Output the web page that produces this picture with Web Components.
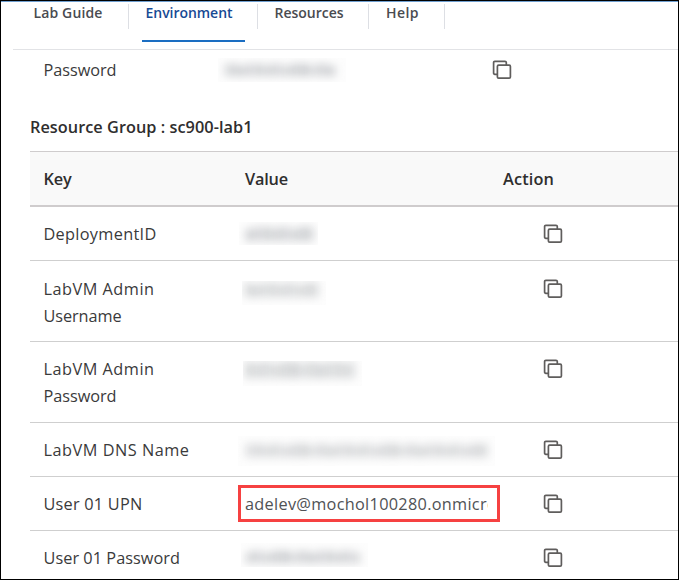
<!DOCTYPE html>
<html lang="en"><head><meta charset="utf-8"><title>Environment</title>
<style>
html,body{margin:0;height:100%;overflow:hidden;background:#fff}
body{font-family:"Open Sans","Noto Sans",sans-serif;color:#323130}
</style></head><body>
<lab-window></lab-window>
<script>
const define=(name,cls)=>customElements.define(name,cls);
class Base extends HTMLElement{
  connectedCallback(){
    if(this.shadowRoot)return;
    this.attachShadow({mode:'open'}).innerHTML=this.render();
    this.ready&&this.ready();
  }
  val(n,d=''){return this.getAttribute(n)??d}
}
/* Text whose tracking is adjusted to a target line width. */
define('fit-text',class extends Base{
  render(){return `<style>:host{display:block;white-space:nowrap;width:max-content}span{display:inline-block}</style><span><slot></slot></span>`}
  ready(){
    const s=this.shadowRoot.querySelector('span'),n=this.textContent.length;
    s.style.letterSpacing=((+this.val('w')-s.getBoundingClientRect().width)/n)+'px';
  }
});
define('copy-icon',class extends Base{
  render(){return `<style>:host{display:block;width:20px;height:20px}svg{display:block}</style>
  <svg width="20" height="20" viewBox="0.2 0.5 20 20" fill="none" stroke="#5f5d5c" stroke-width="1.7"><path d="M5.6 14.8H3.1Q1.8 14.8 1.8 13.5V3.1Q1.8 1.8 3.1 1.8H13.2Q14.5 1.8 14.5 3.1V5.7"/><rect x="5.6" y="5.7" width="13" height="13" rx="1.2"/></svg>`}
});
define('masked-value',class extends Base{
  render(){
    const w=+this.val('w'),h=+this.val('h'),l=+this.val('l',8),r=+this.val('r',8),t=+this.val('t',6),b=+this.val('b',6);
    let bars='',x=l,i=+this.val('seed',1);
    while(x<w-r){const bw=Math.min(4+(i*7)%6,w-r-x),tall=(i*5)%3;
      bars+=`<rect x="${x}" y="${t+(tall?0:2)}" width="${bw}" height="${h-t-b-(tall?0:2)}" opacity="${.78+(i%4)*.07}"/>`;x+=bw+1;i++}
    return `<style>:host{display:block;overflow:hidden;width:${w}px;height:${h}px;background:#fdfdfd}svg{display:block;filter:blur(4.5px)}</style><svg width="${w}" height="${h}" fill="${this.val('ink','#c9cbce')}">${bars}</svg>`}
});
define('nav-tab',class extends Base{
  render(){return `<style>
  :host{display:block;box-sizing:border-box;width:${this.val('width')}px;height:39px;padding-left:${this.val('pad')}px;position:relative;font-size:14px;font-weight:600;line-height:20px;color:#494b50}
  :host([active]){color:#174a94}
  .sep{position:absolute;right:0;top:1px;width:1px;height:25px;background:#dddfe4}
  .line{position:absolute;left:13px;bottom:0;width:103px;height:2px;background:#1b6ec2}
  </style><slot></slot><i class="sep"></i>${this.hasAttribute('active')?'<i class="line"></i>':''}`}
});
define('tab-bar',class extends Base{
  render(){return `<style>:host{display:flex;box-sizing:border-box;height:47px;margin-left:12px;border-bottom:1px solid #e2e3e6}</style><slot></slot>`}
});
define('data-row',class extends Base{
  render(){return `<style>
  :host{display:grid;grid-template-columns:201px 258px 1fr;box-sizing:border-box;height:${this.val('height')}px;border-bottom:1px solid #cfcfcf;font-size:16.3px;line-height:26.5px;color:#3a3a3b}
  .k{padding:${this.val('kt',14)}px 0 0 13.5px}.v{padding:${this.val('vt',13)}px 0 0 ${this.val('vx',14)}px}.a{padding:${this.val('at',17)}px 0 0 54px}
  :host([head]){background:#f9f9f9;border-top:1px solid #cfcccd;border-bottom:2px solid #cfcccd;font-weight:600;color:#2f2e2e}
  :host([head]) .a{padding-left:14px}
  :host([last]){border:0}
  </style><div class="k"><slot name="key"></slot></div><div class="v"><slot name="value"></slot></div><div class="a"><slot name="action"><copy-icon></copy-icon></slot></div>`}
});
define('red-frame',class extends Base{
  render(){return `<style>:host{display:flex;box-sizing:border-box;width:262px;height:37px;border:3px solid #f64141;padding:3px 9px 0 4px;position:relative;z-index:1;color:#505255}div{overflow:hidden;width:243px}</style><div><slot></slot></div>`}
});
define('lab-window',class extends Base{
  render(){return `<style>
  :host{display:block;box-sizing:border-box;width:679px;height:580px;border:1px solid #000;overflow:hidden;background:#fff}
  .top{border-top:1px solid #6f9fd0;padding-top:1px}
  .pw{display:grid;grid-template-columns:217px 274px 1fr;height:63px;box-sizing:border-box;font-size:16.3px;line-height:26px;color:#3a3a3b;padding-top:7px}
  .pw>:first-child{margin-left:42.5px}
  .pw copy-icon{margin-top:3px}
  .pw masked-value{margin-top:1px}
  h2{margin:0;padding:1px 0 0 29px;height:38px;box-sizing:border-box;font-size:16.3px;line-height:26px;font-weight:600;color:#2f2e2e}
  .table{margin-left:29px}
  </style>
  <div class="top"><tab-bar>
   <nav-tab width="116" pad="20.5"><fit-text w="69">Lab Guide</fit-text></nav-tab>
   <nav-tab active width="129" pad="16.5"><fit-text w="87">Environment</fit-text></nav-tab>
   <nav-tab width="111" pad="16.5"><fit-text w="69">Resources</fit-text></nav-tab>
   <nav-tab width="76" pad="17"><fit-text w="33">Help</fit-text></nav-tab>
  </tab-bar></div>
  <div class="pw"><fit-text w="73">Password</fit-text><masked-value w="128" h="24" l="7" r="10"></masked-value><copy-icon></copy-icon></div>
  <h2><fit-text w="222.5">Resource Group : sc900-lab1</fit-text></h2>
  <div class="table">
   <data-row head height="56" vt="14" at="14"><fit-text slot="key" w="28">Key</fit-text><fit-text slot="value" w="43">Value</fit-text><fit-text slot="action" w="51">Action</fit-text></data-row>
   <data-row height="54" vt="15" vx="8"><fit-text slot="key" w="113">DeploymentID</fit-text><masked-value slot="value" w="79" h="23" l="7" r="5" t="5" b="4" seed="3"></masked-value></data-row>
   <data-row height="81" kt="15" vt="20" vx="11" at="18"><div slot="key"><fit-text w="111">LabVM Admin</fit-text><fit-text w="78">Username</fit-text></div><masked-value slot="value" w="84" h="24" l="3" t="2" b="8" seed="2" ink="#d0d2d4"></masked-value></data-row>
   <data-row height="81" vt="19" vx="12"><div slot="key"><fit-text w="111">LabVM Admin</fit-text><fit-text w="73">Password</fit-text></div><masked-value slot="value" w="119" h="25" l="2" t="1" b="8" seed="5" ink="#d0d2d4"></masked-value></data-row>
   <data-row height="54" vx="7" at="17"><fit-text slot="key" w="146">LabVM DNS Name</fit-text><masked-value slot="value" w="257" h="30" t="8" b="9" seed="4" ink="#d2d4d6"></masked-value></data-row>
   <data-row height="54" vt="8" vx="7"><fit-text slot="key" w="99">User 01 UPN</fit-text><red-frame slot="value"><fit-text w="252">adelev@mochol100280.onmicro</fit-text></red-frame></data-row>
   <data-row last height="60" vt="12" vx="10"><fit-text slot="key" w="136.5">User 01 Password</fit-text><masked-value slot="value" w="127" h="24" l="5" t="8" b="4" seed="6"></masked-value></data-row>
  </div>`}
});
</script></body></html>
